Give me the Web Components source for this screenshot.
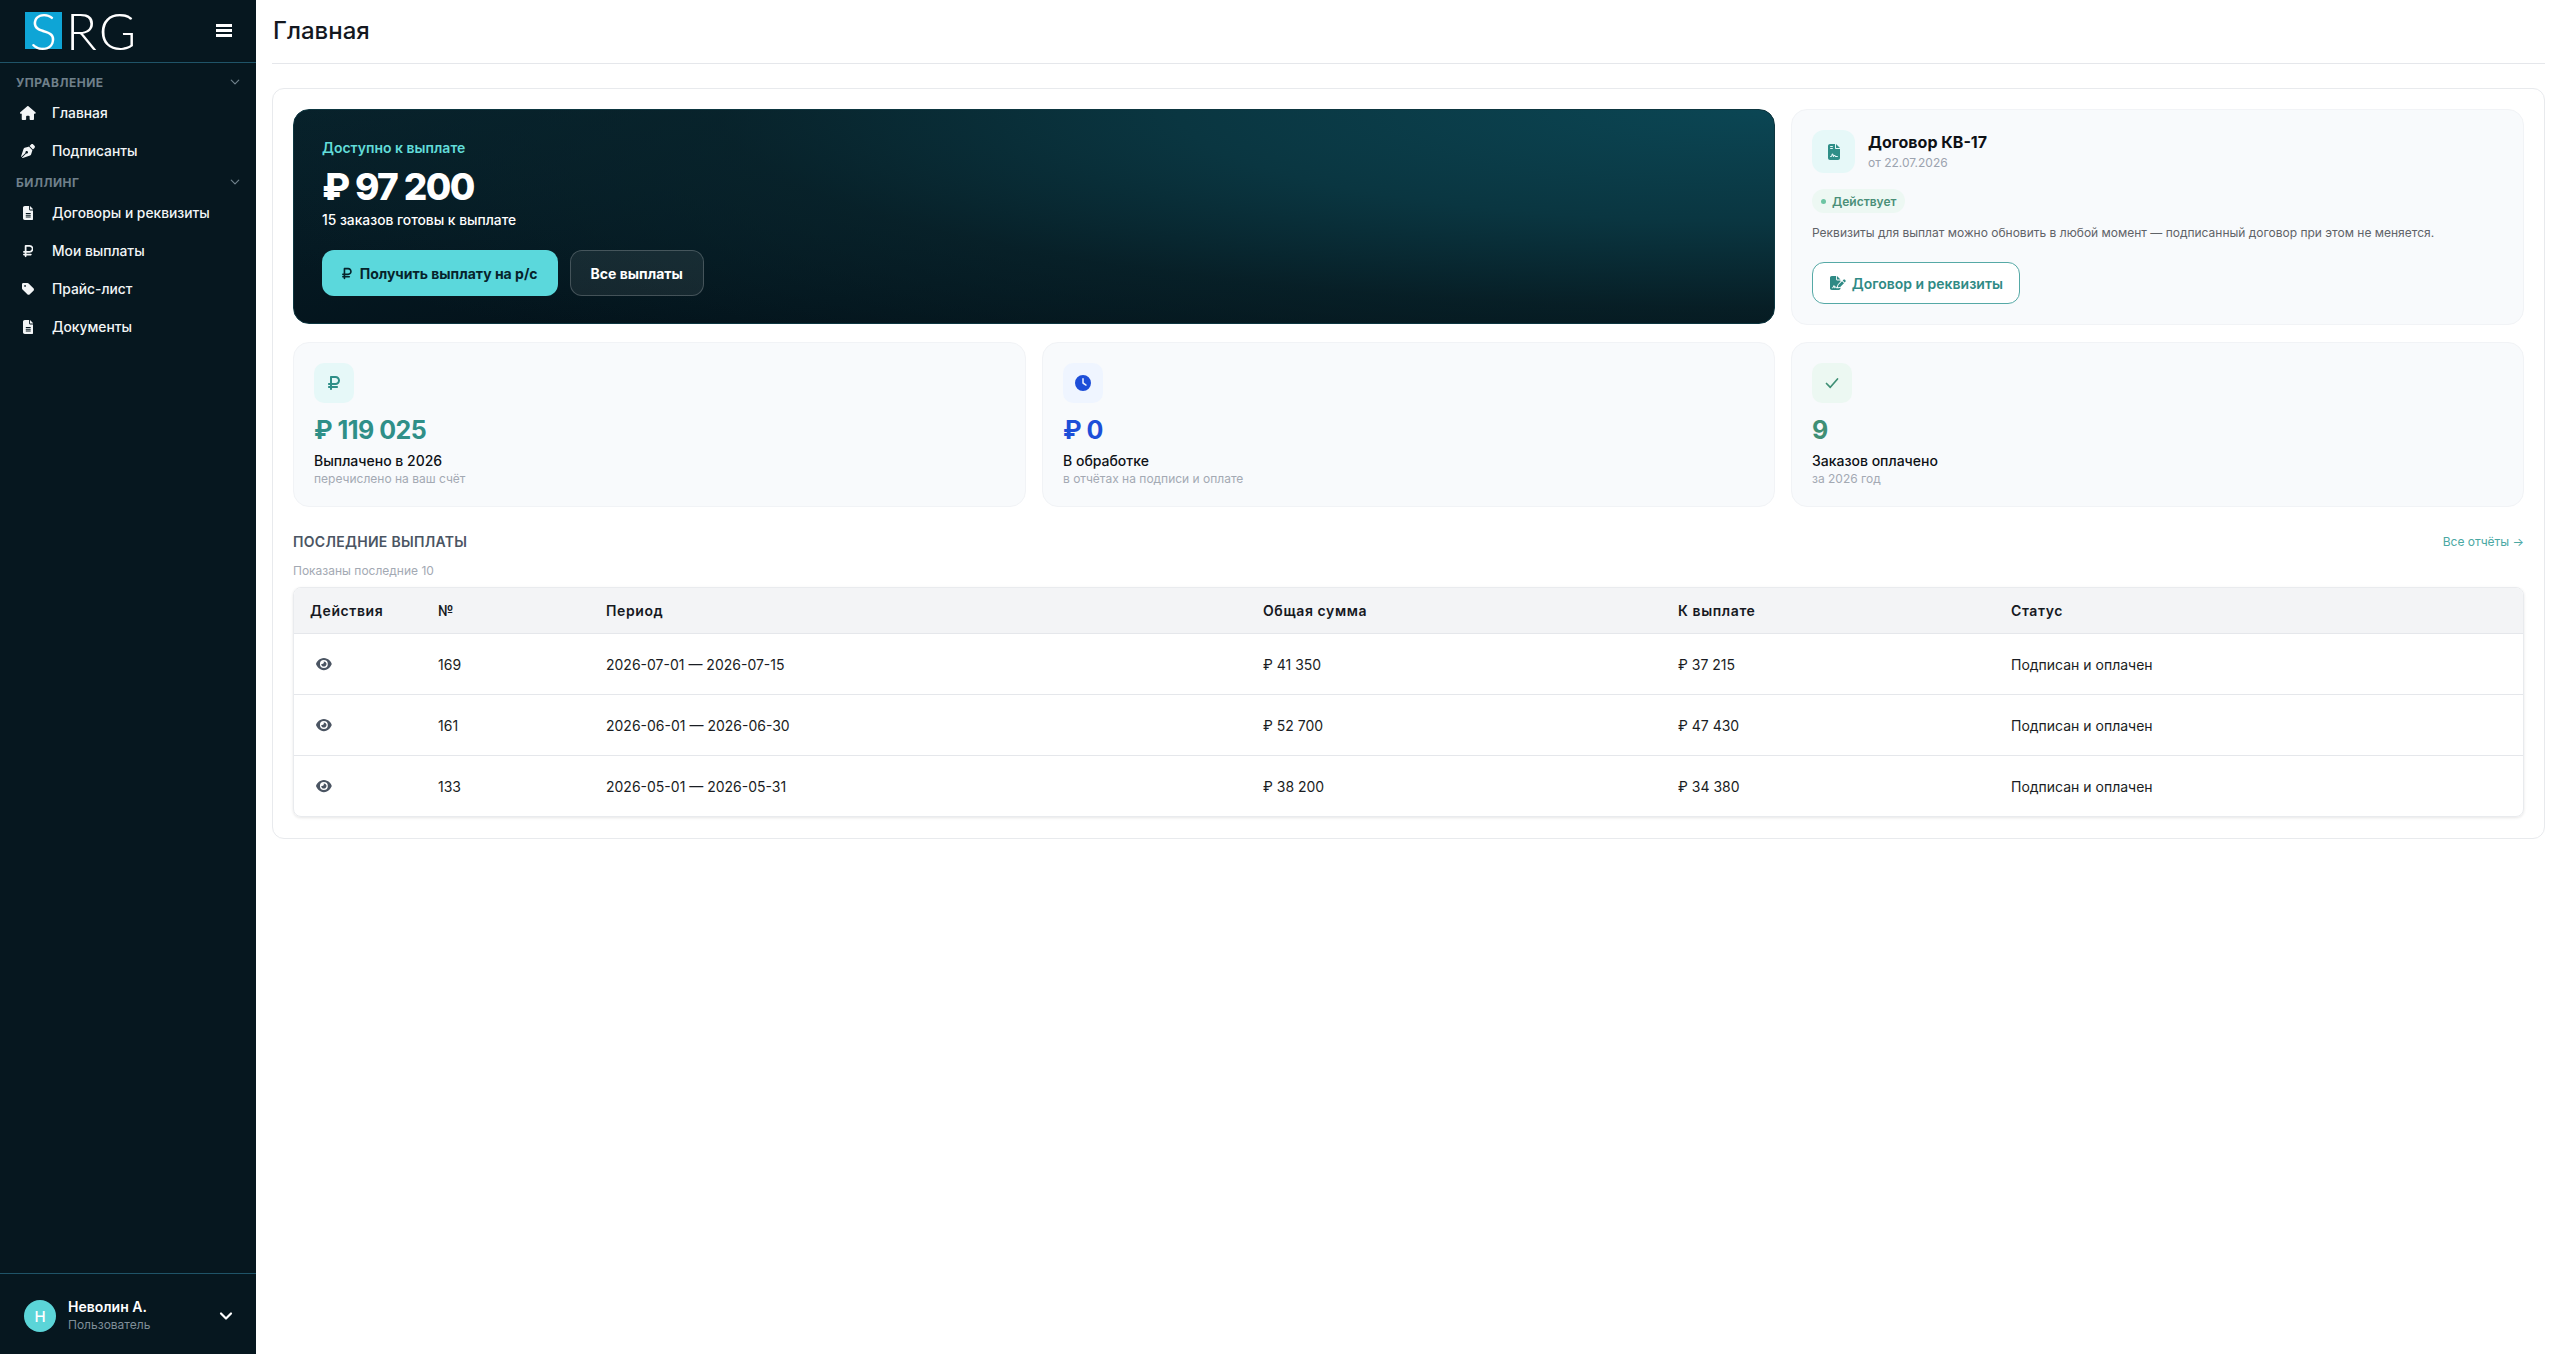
<!DOCTYPE html>
<html lang="ru">
<head>
<meta charset="utf-8">
<title>Главная</title>
<style>
    html, body { margin: 0; height: 100%; background: #fff; }
    body { font-family: Inter, "Noto Sans", sans-serif; color: #111; }
</style>
</head>
<body>
<app-shell>
    <app-sidebar slot="sidebar">
        <nav-section label="Управление"></nav-section>
        <nav-item icon="house">Главная</nav-item>
        <nav-item icon="pen">Подписанты</nav-item>
        <nav-section label="Биллинг"></nav-section>
        <nav-item icon="file">Договоры и реквизиты</nav-item>
        <nav-item icon="ruble">Мои выплаты</nav-item>
        <nav-item icon="tag">Прайс-лист</nav-item>
        <nav-item icon="file">Документы</nav-item>
    </app-sidebar>
    <page-header>Главная</page-header>
    <dash-board>
        <payout-hero slot="hero"></payout-hero>
        <contract-card slot="contract"></contract-card>
        <stat-card icon="ruble" tone="teal" value="₽ 119 025" label="Выплачено в 2026" sub="перечислено на ваш счёт"></stat-card>
        <stat-card icon="clock" tone="blue" value="₽ 0" label="В обработке" sub="в отчётах на подписи и оплате"></stat-card>
        <stat-card icon="check" tone="green" value="9" label="Заказов оплачено" sub="за 2026 год"></stat-card>
        <payouts-table slot="table"></payouts-table>
    </dash-board>
</app-shell>

<script>
// font awesome solid shapes, [viewBox width, path]
const ICONS = {
    house: [576, "M575.8 255.5c0 18-15 32.1-32 32.1h-32l.7 160.2c0 2.7-.2 5.4-.5 8.1V472c0 22.1-17.9 40-40 40H456c-1.1 0-2.2 0-3.3-.1c-1.4 .1-2.8 .1-4.2 .1H416 392c-22.1 0-40-17.9-40-40V448 384c0-17.7-14.3-32-32-32H256c-17.7 0-32 14.3-32 32v64 24c0 22.1-17.9 40-40 40H160 128.1c-1.5 0-3-.1-4.5-.2c-1.2 .1-2.4 .2-3.6 .2H104c-22.1 0-40-17.9-40-40V360c0-.9 0-1.9 .1-2.8V287.6H32c-18 0-32-14-32-32.1c0-9 3-17 10-24L266.4 8c7-7 15-8 22-8s15 2 21 7L564.8 231.5c8 7 12 15 11 24z"],
    pen: [512, "M368.4 18.3L312.7 74.1 437.9 199.3l55.7-55.7c21.9-21.9 21.9-57.3 0-79.2L447.6 18.3c-21.9-21.9-57.3-21.9-79.2 0zM288 94.6l-9.2 2.8L134.7 140.6c-19.9 6-35.7 21.2-42.3 41L3.8 445.8c-3.8 11.3-1 23.9 7.3 32.4L164.7 324.7c-3-6.3-4.7-13.3-4.7-20.7c0-26.5 21.5-48 48-48s48 21.5 48 48s-21.5 48-48 48c-7.4 0-14.4-1.7-20.7-4.7L33.7 500.9c8.6 8.3 21.1 11.2 32.4 7.3l264.3-88.6c19.7-6.6 35-22.4 41-42.3l43.2-144.1 2.8-9.2L288 94.6z"],
    file: [384, "M64 0C28.7 0 0 28.7 0 64V448c0 35.3 28.7 64 64 64H320c35.3 0 64-28.7 64-64V160H256c-17.7 0-32-14.3-32-32V0H64zM256 0V128H384L256 0zM112 256H272c8.8 0 16 7.2 16 16s-7.2 16-16 16H112c-8.8 0-16-7.2-16-16s7.2-16 16-16zm0 64H272c8.8 0 16 7.2 16 16s-7.2 16-16 16H112c-8.8 0-16-7.2-16-16s7.2-16 16-16zm0 64H272c8.8 0 16 7.2 16 16s-7.2 16-16 16H112c-8.8 0-16-7.2-16-16s7.2-16 16-16z"],
    contract: [384, "M64 0C28.7 0 0 28.7 0 64V448c0 35.3 28.7 64 64 64H320c35.3 0 64-28.7 64-64V160H256c-17.7 0-32-14.3-32-32V0H64zM256 0V128H384L256 0zM80 64h64c8.8 0 16 7.2 16 16s-7.2 16-16 16H80c-8.8 0-16-7.2-16-16s7.2-16 16-16zm0 64h64c8.8 0 16 7.2 16 16s-7.2 16-16 16H80c-8.8 0-16-7.2-16-16s7.2-16 16-16zm54.2 253.8c-6.1 20.3-24.8 34.2-46 34.2H80c-8.8 0-16-7.2-16-16s7.2-16 16-16h8.2c7.1 0 13.3-4.6 15.3-11.4l14.9-49.5c3.4-11.3 13.8-19.1 25.6-19.1s22.2 7.7 25.6 19.1l11.6 38.6c7.4-6.2 16.8-9.7 26.8-9.7c15.9 0 30.4 9 37.5 23.2l4.4 8.8H304c8.8 0 16 7.2 16 16s-7.2 16-16 16H240c-6.1 0-11.6-3.4-14.3-8.8l-8.8-17.7c-1.7-3.4-5.1-5.5-8.8-5.5s-7.2 2.1-8.8 5.5l-8.8 17.7c-2.9 5.9-9.2 9.4-15.7 8.8s-12.1-5.1-13.9-11.3L144 349l-9.8 32.8z"],
    signature: [576, "M64 0C28.7 0 0 28.7 0 64V448c0 35.3 28.7 64 64 64H320c35.3 0 64-28.7 64-64V428.7c-2.7 1.1-5.4 2-8.2 2.7l-60.1 15c-3 .7-6 1.2-9 1.4c-.9 .1-1.8 .2-2.7 .2H240c-6.1 0-11.6-3.4-14.3-8.8l-8.8-17.7c-1.7-3.4-5.1-5.5-8.8-5.5s-7.2 2.1-8.8 5.5l-8.8 17.7c-2.9 5.9-9.2 9.4-15.7 8.8s-12.1-5.1-13.9-11.3L144 381l-9.8 32.8c-6.1 20.3-24.8 34.2-46 34.2H80c-8.8 0-16-7.2-16-16s7.2-16 16-16h8.2c7.1 0 13.3-4.6 15.3-11.4l14.9-49.5c3.4-11.3 13.8-19.1 25.6-19.1s22.2 7.7 25.6 19.1l11.6 38.6c7.4-6.2 16.8-9.7 26.8-9.7c15.9 0 30.4 9 37.5 23.2l4.4 8.8h8.9c-3.1-8.8-3.7-18.4-1.4-27.8l15-60.1c2.8-11.3 8.6-21.5 16.8-29.7L384 203.6V160H256c-17.7 0-32-14.3-32-32V0H64zM256 0V128H384L256 0zM549.8 139.7c-15.6-15.6-40.9-15.6-56.6 0l-29.4 29.4 71 71 29.4-29.4c15.6-15.6 15.6-40.9 0-56.6l-14.4-14.4zM311.9 321c-4.1 4.1-7 9.2-8.4 14.9l-15 60.1c-1.4 5.5 .2 11.2 4.2 15.2s9.7 5.6 15.2 4.2l60.1-15c5.6-1.4 10.8-4.3 14.9-8.4L512.1 262.7l-71-71L311.9 321z"],
    ruble: [384, "M96 32C78.3 32 64 46.3 64 64V256H32c-17.7 0-32 14.3-32 32s14.3 32 32 32H64v32H32c-17.7 0-32 14.3-32 32s14.3 32 32 32H64v32c0 17.7 14.3 32 32 32s32-14.3 32-32V416H288c17.7 0 32-14.3 32-32s-14.3-32-32-32H128V320H240c79.5 0 144-64.5 144-144s-64.5-144-144-144H96zM240 256H128V96H240c44.2 0 80 35.8 80 80s-35.8 80-80 80z"],
    tag: [448, "M0 80V229.5c0 17 6.7 33.3 18.7 45.3l176 176c25 25 65.5 25 90.5 0L418.7 317.3c25-25 25-65.5 0-90.5l-176-176c-12-12-28.3-18.7-45.3-18.7H48C21.5 32 0 53.5 0 80zm112 32a32 32 0 1 1 0 64 32 32 0 1 1 0-64z"],
    clock: [512, "M256 0a256 256 0 1 1 0 512A256 256 0 1 1 256 0zM232 120V256c0 8 4 15.5 10.7 20l96 64c11 7.4 25.9 4.4 33.3-6.7s4.4-25.9-6.7-33.3L280 243.2V120c0-13.3-10.7-24-24-24s-24 10.7-24 24z"],
    eye: [576, "M288 32c-80.8 0-145.5 36.8-192.6 80.6C48.6 156 17.3 208 2.5 243.7c-3.3 7.9-3.3 16.7 0 24.6C17.3 304 48.6 356 95.4 399.4C142.5 443.2 207.2 480 288 480s145.5-36.8 192.6-80.6c46.8-43.5 78.1-95.4 93-131.1c3.3-7.9 3.3-16.7 0-24.6c-14.9-35.7-46.2-87.7-93-131.1C433.5 68.8 368.8 32 288 32zM144 256a144 144 0 1 1 288 0 144 144 0 1 1 -288 0zm144-64c0 35.3-28.7 64-64 64c-7.1 0-13.9-1.2-20.3-3.3c-5.5-1.8-11.9 1.6-11.7 7.4c.3 6.9 1.3 13.8 3.2 20.7c13.7 51.2 66.4 81.6 117.6 67.9s81.6-66.4 67.9-117.6c-11.1-41.5-47.8-69.4-88.6-71.1c-5.8-.2-9.2 6.1-7.4 11.7c2.1 6.4 3.3 13.2 3.3 20.3z"],
};

function icon(name, size) {
    const [w, d] = ICONS[name];
    return `<svg width="${size * w / 512}" height="${size}" viewBox="0 0 ${w} 512" fill="currentColor" style="display:block;flex:none"><path d="${d}"/></svg>`;
}

function chevron(size, width) {
    return `<svg width="${size}" height="${size}" viewBox="0 0 16 16" fill="none" stroke="currentColor" stroke-width="${width}" stroke-linecap="round" stroke-linejoin="round" style="display:block"><path d="M3 5.5l5 5 5-5"/></svg>`;
}

class AppShell extends HTMLElement {
    constructor() {
        super();
        this.shadow = this.attachShadow({ mode: "open" });
    }

    connectedCallback() {
        this.shadow.innerHTML = `
            <style>
                :host { display: grid; grid-template-columns: 256px 1fr; height: 100vh; }
                main { min-width: 0; padding: 0 14px 0 16px; }
            </style>
            <slot name="sidebar"></slot>
            <main><slot></slot></main>
        `;
    }
}
customElements.define("app-shell", AppShell);

class AppSidebar extends HTMLElement {
    constructor() {
        super();
        this.shadow = this.attachShadow({ mode: "open" });
    }

    connectedCallback() {
        this.shadow.innerHTML = `
            <style>
                :host { display: flex; flex-direction: column; background: #06171f; color: #fff; height: 100vh; }
                .top { height: 63px; border-bottom: 1px solid #1f5468; display: flex; align-items: center; justify-content: space-between; padding: 0 24px 2px 25px; box-sizing: border-box; flex: none; }
                .logo { display: flex; align-items: center; font: 300 51px/37px Lato, "Open Sans", sans-serif; height: 37px; color: #fff; }
                .logo b { font-weight: 300; display: block; width: 37px; height: 37px; background: #0ea5d6; text-align: center; margin-right: 4px; }
                .logo span { letter-spacing: 2px; }
                .burger { width: 16px; height: 13px; border-top: 3px solid #fff; border-bottom: 3px solid #fff; box-sizing: border-box; position: relative; }
                .burger::after { content: ""; position: absolute; left: 0; right: 0; top: 2px; height: 3px; background: #fff; }
                nav { flex: 1; padding-top: 7px; }
                .user { height: 81px; box-sizing: border-box; padding: 4px 22px 0 24px; border-top: 1px solid #1f5468; display: flex; align-items: center; flex: none; gap: 12px; }
                .avatar { width: 32px; height: 32px; border-radius: 50%; background: #5bd5d8; font-size: 15px; font-weight: 500; display: flex; align-items: center; justify-content: center; flex: none; }
                .who { flex: 1; min-width: 0; }
                .name { font-size: 14px; font-weight: 600; line-height: 18px; }
                .role { font-size: 12px; color: #7f8e98; line-height: 18px; }
            </style>
            <div class="top">
                <div class="logo"><b>S</b><span>RG</span></div>
                <div class="burger"></div>
            </div>
            <nav><slot></slot></nav>
            <div class="user">
                <div class="avatar">Н</div>
                <div class="who">
                    <div class="name">Неволин А.</div>
                    <div class="role">Пользователь</div>
                </div>
                ${chevron(16, 2.2)}
            </div>
        `;
    }
}
customElements.define("app-sidebar", AppSidebar);

class NavSection extends HTMLElement {
    constructor() {
        super();
        this.shadow = this.attachShadow({ mode: "open" });
    }

    connectedCallback() {
        this.shadow.innerHTML = `
            <style>
                :host { display: flex; align-items: center; justify-content: space-between; height: 24px; box-sizing: border-box; padding: 0 15px 0 16px; color: #6f808b; font-size: 12px; font-weight: 700; letter-spacing: .5px; text-transform: uppercase; }
            </style>
            <span>${this.getAttribute("label")}</span>
            ${chevron(12, 1.6)}
        `;
    }
}
customElements.define("nav-section", NavSection);

class NavItem extends HTMLElement {
    constructor() {
        super();
        this.shadow = this.attachShadow({ mode: "open" });
    }

    connectedCallback() {
        this.shadow.innerHTML = `
            <style>
                :host { display: flex; align-items: center; height: 38px; padding-left: 20px; font-size: 13.8px; font-weight: 500; color: #f2f5f6; }
                .ic { width: 16px; margin-right: 16px; display: flex; justify-content: center; }
            </style>
            <span class="ic">${icon(this.getAttribute("icon"), 14)}</span>
            <slot></slot>
        `;
    }
}
customElements.define("nav-item", NavItem);

class PageHeader extends HTMLElement {
    constructor() {
        super();
        this.shadow = this.attachShadow({ mode: "open" });
    }

    connectedCallback() {
        this.shadow.innerHTML = `
            <style>
                :host { display: flex; align-items: center; height: 64px; box-sizing: border-box; border-bottom: 1px solid #e5e7eb; padding: 0 0 3px 1px; font-size: 24px; font-weight: 500; color: #14181f; margin-bottom: 24px; }
            </style>
            <slot></slot>
        `;
    }
}
customElements.define("page-header", PageHeader);

class DashBoard extends HTMLElement {
    constructor() {
        super();
        this.shadow = this.attachShadow({ mode: "open" });
    }

    connectedCallback() {
        this.shadow.innerHTML = `
            <style>
                :host { display: grid; grid-template-columns: repeat(3, minmax(0, 1fr)); column-gap: 16px; row-gap: 17px; padding: 20px; border: 1px solid #e8eaed; border-radius: 12px; background: #fff; }
                ::slotted([slot="hero"]) { grid-column: span 2; }
                ::slotted([slot="table"]) { grid-column: 1 / -1; }
            </style>
            <slot name="hero"></slot>
            <slot name="contract"></slot>
            <slot></slot>
            <slot name="table"></slot>
        `;
    }
}
customElements.define("dash-board", DashBoard);

class PayoutHero extends HTMLElement {
    constructor() {
        super();
        this.shadow = this.attachShadow({ mode: "open" });
    }

    connectedCallback() {
        this.shadow.innerHTML = `
            <style>
                :host { display: block; height: 215px; box-sizing: border-box; padding: 29px 28px 0; border: 1px solid #0d3640; border-radius: 16px; color: #fff; background: radial-gradient(ellipse 115% 150% at 100% 0, #0b4654 0%, #0a3641 35%, rgba(9,38,46,.7) 62%, rgba(5,20,26,0) 100%), linear-gradient(170deg, #07202a 0%, #03121a 60%, #020b10 100%); }
                .label { font-size: 14px; font-weight: 600; line-height: 18px; color: #62dcd9; }
                .amount { font-size: 37px; font-weight: 800; line-height: 44px; letter-spacing: -1.6px; margin-top: 8px; }
                .sub { font-size: 13.8px; font-weight: 500; line-height: 18px; margin-top: 2px; }
                .actions { display: flex; gap: 12px; margin-top: 21px; }
                .btn { height: 46px; box-sizing: border-box; display: flex; align-items: center; gap: 8px; border-radius: 12px; padding: 0 20px; font-size: 14px; font-weight: 700; }
                .primary { background: #5bd8dc; color: #06232b; }
                .ghost { color: #fff; background: rgba(255,255,255,.07); border: 1px solid rgba(255,255,255,.2); }
            </style>
            <div class="label">Доступно к выплате</div>
            <div class="amount">₽ 97 200</div>
            <div class="sub">15 заказов готовы к выплате</div>
            <div class="actions">
                <div class="btn primary">${icon("ruble", 13)}Получить выплату на р/с</div>
                <div class="btn ghost">Все выплаты</div>
            </div>
        `;
    }
}
customElements.define("payout-hero", PayoutHero);

class ContractCard extends HTMLElement {
    constructor() {
        super();
        this.shadow = this.attachShadow({ mode: "open" });
    }

    connectedCallback() {
        this.shadow.innerHTML = `
            <style>
                :host { display: block; box-sizing: border-box; padding: 20px; background: #f8fafc; border: 1px solid #f1f3f6; border-radius: 16px; }
                .head { display: flex; gap: 13px; }
                .ic { width: 43px; height: 43px; border-radius: 12px; background: #e6f8f8; color: #2f8f88; display: flex; align-items: center; justify-content: center; }
                .title { font-size: 16px; font-weight: 700; line-height: 22px; color: #0e1116; margin-top: 1px; }
                .date { font-size: 12px; line-height: 18px; color: #9ca3af; margin-top: 1px; }
                .badge { display: inline-flex; align-items: center; gap: 6px; height: 24px; margin-top: 16px; padding: 0 9px; border-radius: 12px; background: #edf8f3; color: #4a8f78; font-size: 12px; font-weight: 600; }
                .badge i { width: 5px; height: 5px; border-radius: 50%; background: #6cc5a3; }
                .desc { font-size: 12px; line-height: 18px; color: #5f6368; margin-top: 11px; }
                .btn { display: inline-flex; align-items: center; gap: 6px; height: 42px; box-sizing: border-box; margin-top: 20px; padding: 0 16px 0 17px; background: #fff; border: 1.5px solid #55a9a6; border-radius: 12px; color: #2f8a85; font-size: 14px; font-weight: 600; }
            </style>
            <div class="head">
                <div class="ic">${icon("contract", 16)}</div>
                <div>
                    <div class="title">Договор КВ-17</div>
                    <div class="date">от 22.07.2026</div>
                </div>
            </div>
            <div><span class="badge"><i></i>Действует</span></div>
            <div class="desc">Реквизиты для выплат можно обновить в любой момент — подписанный договор при этом не меняется.</div>
            <div class="btn">${icon("signature", 14)}Договор и реквизиты</div>
        `;
    }
}
customElements.define("contract-card", ContractCard);

const TONES = {
    teal: ["#e6f8f8", "#2f8f88"],
    blue: ["#eff5ff", "#1d4ed8"],
    green: ["#ecf8f2", "#3f8f75"],
};

class StatCard extends HTMLElement {
    constructor() {
        super();
        this.shadow = this.attachShadow({ mode: "open" });
    }

    connectedCallback() {
        const [bg, fg] = TONES[this.getAttribute("tone")];
        const name = this.getAttribute("icon");
        const glyph = name === "check"
            ? `<svg width="16" height="16" viewBox="0 0 16 16" fill="none" stroke="currentColor" stroke-width="1.7" stroke-linecap="round" stroke-linejoin="round"><path d="M2.5 8.5l3.8 3.8L13.5 4"/></svg>`
            : icon(name, 16);
        this.shadow.innerHTML = `
            <style>
                :host { display: block; height: 165px; box-sizing: border-box; padding: 20px; background: #f8fafc; border: 1px solid #f1f3f6; border-radius: 16px; }
                .ic { width: 40px; height: 40px; border-radius: 10px; background: ${bg}; color: ${fg}; display: flex; align-items: center; justify-content: center; }
                .value { font-size: 25px; font-weight: 700; line-height: 32px; letter-spacing: -.5px; color: ${fg}; margin-top: 11px; }
                .label { font-size: 14px; font-weight: 500; line-height: 18px; color: #0e1116; margin-top: 6px; }
                .sub { font-size: 12px; line-height: 17px; color: #a3a9b3; }
            </style>
            <div class="ic">${glyph}</div>
            <div class="value">${this.getAttribute("value")}</div>
            <div class="label">${this.getAttribute("label")}</div>
            <div class="sub">${this.getAttribute("sub")}</div>
        `;
    }
}
customElements.define("stat-card", StatCard);

const PAYOUTS = [
    ["169", "2026-07-01 — 2026-07-15", "₽ 41 350", "₽ 37 215"],
    ["161", "2026-06-01 — 2026-06-30", "₽ 52 700", "₽ 47 430"],
    ["133", "2026-05-01 — 2026-05-31", "₽ 38 200", "₽ 34 380"],
];

class PayoutsTable extends HTMLElement {
    constructor() {
        super();
        this.shadow = this.attachShadow({ mode: "open" });
    }

    connectedCallback() {
        const rows = PAYOUTS.map(([num, period, total, pay]) => `
            <tr>
                <td><span class="eye">${icon("eye", 14)}</span></td>
                <td>${num}</td>
                <td>${period}</td>
                <td>${total}</td>
                <td>${pay}</td>
                <td>Подписан и оплачен</td>
            </tr>`).join("");
        this.shadow.innerHTML = `
            <style>
                :host { display: block; margin: 1px 0 1px; }
                .head { display: flex; align-items: center; justify-content: space-between; height: 32px; }
                h2 { margin: 0; font-size: 14px; font-weight: 600; letter-spacing: .3px; text-transform: uppercase; color: #4b5563; }
                a { font-size: 12px; color: #4aa8a3; }
                .hint { font-size: 12px; color: #a3a9b3; line-height: 18px; margin: 5px 0 7px; }
                .wrap { border: 1px solid #e9ebee; border-radius: 8px; overflow: hidden; box-shadow: 0 1px 3px rgba(0,0,0,.1); }
                table { width: 100%; border-collapse: collapse; table-layout: fixed; font-size: 14px; color: #1a1d23; }
                th { height: 45px; padding: 0 0 0 16px; text-align: left; font-size: 14px; font-weight: 600; letter-spacing: .6px; background: #f3f4f6; border-bottom: 1px solid #e5e7eb; color: #16191f; }
                td { height: 60px; padding: 0 0 0 16px; border-bottom: 1px solid #e5e7eb; }
                tr:last-child td { border-bottom: 0; }
                .eye { color: #4b5563; display: block; margin-left: 6px; }
            </style>
            <div class="head"><h2>Последние выплаты</h2><a>Все отчёты →</a></div>
            <div class="hint">Показаны последние 10</div>
            <div class="wrap">
                <table>
                    <colgroup>
                        <col style="width:128px"><col style="width:168px"><col style="width:657px">
                        <col style="width:415px"><col style="width:333px"><col>
                    </colgroup>
                    <thead>
                        <tr><th>Действия</th><th>№</th><th>Период</th><th>Общая сумма</th><th>К выплате</th><th>Статус</th></tr>
                    </thead>
                    <tbody>${rows}</tbody>
                </table>
            </div>
        `;
    }
}
customElements.define("payouts-table", PayoutsTable);
</script>
</body>
</html>
